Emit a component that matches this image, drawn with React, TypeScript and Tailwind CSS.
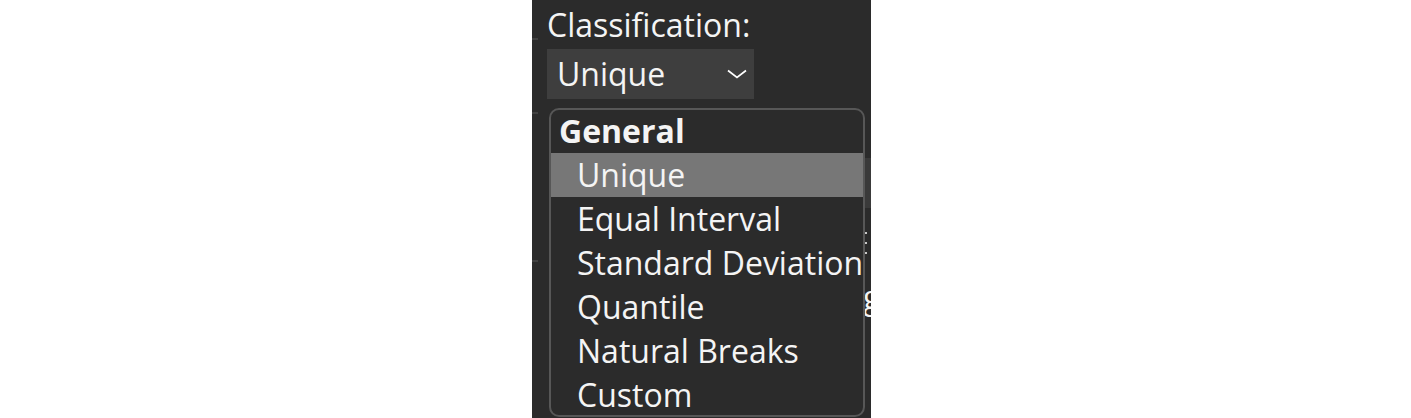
const options = [
  "Unique",
  "Equal Interval",
  "Standard Deviation",
  "Quantile",
  "Natural Breaks",
  "Custom",
];

export default function App() {
  const selected = "Unique";

  return (
    <div className="h-[418px] w-full bg-white font-['Open_Sans',sans-serif] text-[#f4f4f4]">
      <div className="relative ml-[532px] flex h-full w-[339px] flex-col overflow-hidden bg-[#2b2b2b]">
        <div className="flex items-start pt-[5px]">
          <span className="mt-[33px] h-[2px] w-[6px] bg-[#414141]" />
          <label className="ml-[9px] text-[32px] leading-[40px]">Classification:</label>
        </div>
        <div className="pl-[15px] pt-[4px]">
          <button className="flex h-[50px] w-[207px] items-center justify-between bg-[#3e3e3e] pl-[10px] pr-[7px] text-[32px] leading-[40px]">
            <span>{selected}</span>
            <svg width="20" height="10" viewBox="0 0 20 10" fill="none" className="-mt-[1px]">
              <polyline points="1,1.5 10,8.5 19,1.5" stroke="#ffffff" strokeWidth="1.7" />
            </svg>
          </button>
        </div>

        {/* what lies under the open menu */}
        <div className="flex flex-col">
          <span className="mt-[13px] h-[2px] w-[6px] bg-[#414141]" />
          <span className="mt-[44px] h-[50px] w-[8px] self-end bg-[#3a3a3a]" />
          <div className="mr-[4px] mt-[24px] flex flex-col gap-[8px] self-end">
            <span className="h-[2px] w-[2px] bg-[#c8c8c8]" />
            <span className="h-[2px] w-[2px] bg-[#c8c8c8]" />
            <span className="h-[2px] w-[2px] bg-[#c8c8c8]" />
          </div>
          <span className="mt-[6px] h-[2px] w-[6px] bg-[#414141]" />
          <span className="ml-[331px] mt-[15px] whitespace-nowrap text-[32px] leading-[40px]">g</span>
        </div>

        <div className="absolute left-[17px] top-[108px] flex h-[309px] w-[316px] flex-col overflow-hidden rounded-[10px] border-2 border-[#575757] bg-[#2b2b2b]">
          <div className="h-[43px] shrink-0 pl-[8px] text-[32px] font-bold leading-[41px]">General</div>
          {options.map((o) => (
            <div
              key={o}
              className={`h-[44px] shrink-0 whitespace-nowrap pl-[26px] text-[32px] leading-[43px] ${
                o === selected ? "bg-[#777777]" : ""
              }`}
            >
              {o}
            </div>
          ))}
        </div>
      </div>
    </div>
  );
}
